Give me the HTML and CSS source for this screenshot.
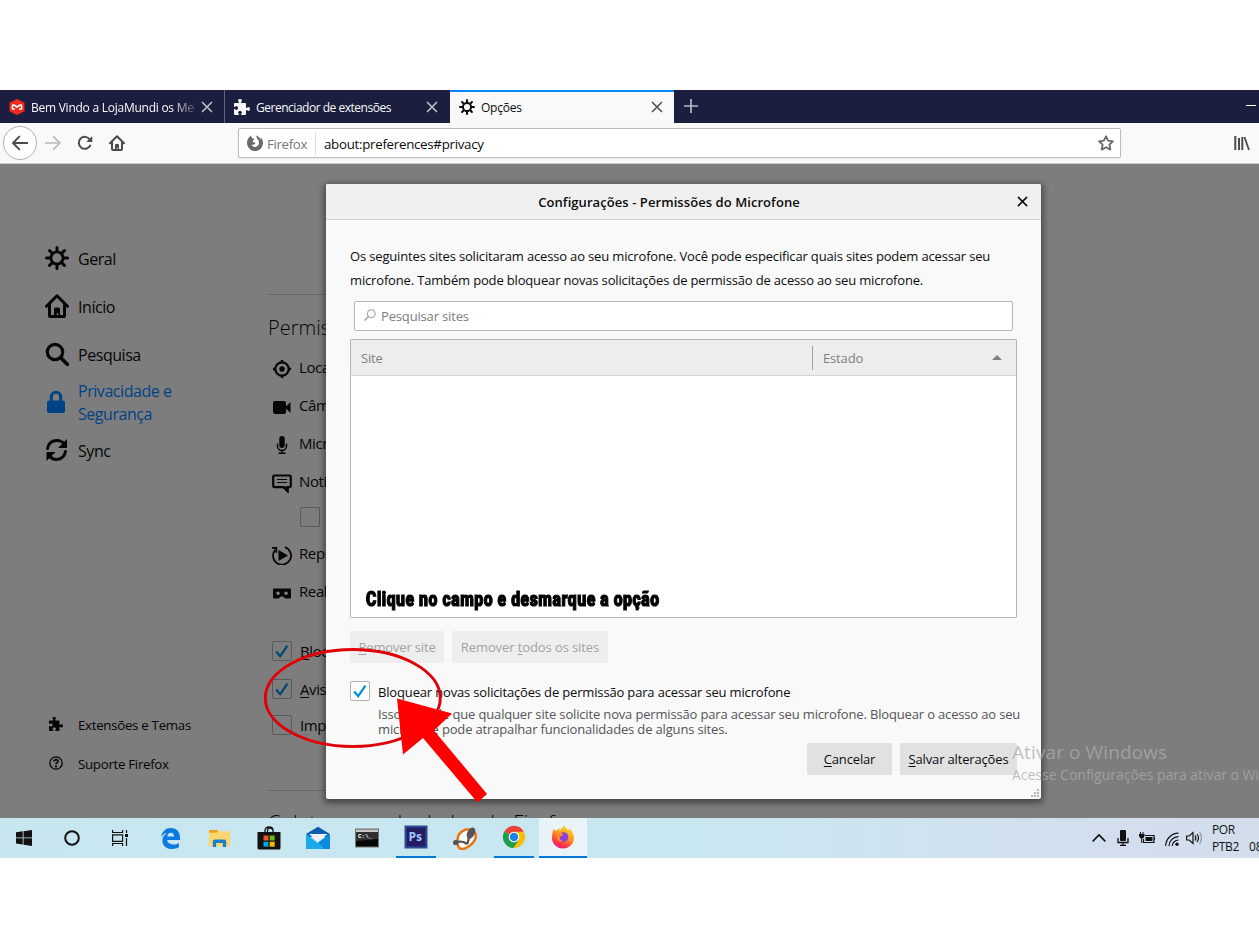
FILE: index.html
```html
<!DOCTYPE html>
<html lang="pt-BR">

<head>
  <meta charset="utf-8">
  <title>Opções</title>
  <link rel="stylesheet" href="styles.css">
</head>

<body>

  <!-- Shared icons -->
  <svg class="defs">
    <symbol id="gear" viewBox="0 0 16 16">
      <path d="M15 7h-2.1a4.967 4.967 0 0 0-.732-1.753l1.49-1.49a1 1 0 0 0-1.414-1.414l-1.49 1.49A4.968 4.968 0 0 0 9 3.1V1a1 1 0 0 0-2 0v2.1a4.968 4.968 0 0 0-1.753.732l-1.49-1.49a1 1 0 0 0-1.414 1.415l1.49 1.49A4.967 4.967 0 0 0 3.1 7H1a1 1 0 0 0 0 2h2.1a4.968 4.968 0 0 0 .737 1.763l-1.495 1.48a1 1 0 1 0 1.414 1.414l1.48-1.495A4.968 4.968 0 0 0 7 12.9V15a1 1 0 0 0 2 0v-2.1a4.968 4.968 0 0 0 1.753-.732l1.49 1.49a1 1 0 0 0 1.414-1.414l-1.49-1.49A4.967 4.967 0 0 0 12.9 9H15a1 1 0 0 0 0-2zM4.9 8a3.1 3.1 0 1 1 3.1 3.1 3.1 3.1 0 0 1-3.1-3.1z" />
    </symbol>
    <symbol id="puzzle" viewBox="0 0 16 16">
      <path d="M14.5 8c-.971 0-1 1-1.75 1a.765.765 0 0 1-.75-.75V5a1 1 0 0 0-1-1H7.75A.765.765 0 0 1 7 3.25c0-.75 1-.779 1-1.75C8 .635 7.1 0 6 0S4 .635 4 1.5c0 .971 1 1 1 1.75a.765.765 0 0 1-.75.75H1a1 1 0 0 0-1 1v2.25A.765.765 0 0 0 .75 8c.75 0 .779-1 1.75-1C3.365 7 4 7.9 4 9s-.635 2-1.5 2c-.971 0-1-1-1.75-1a.765.765 0 0 0-.75.75V15a1 1 0 0 0 1 1h3.25a.765.765 0 0 0 .75-.75c0-.75-1-.779-1-1.75 0-.865.9-1.5 2-1.5s2 .635 2 1.5c0 .971-1 1-1 1.75a.765.765 0 0 0 .75.75H11a1 1 0 0 0 1-1v-3.25a.765.765 0 0 1 .75-.75c.75 0 .779 1 1.75 1 .865 0 1.5-.9 1.5-2s-.635-2-1.5-2z" />
    </symbol>
    <symbol id="home" viewBox="0 0 16 16">
      <path d="M1 8.2 8 1.2l7 7M3 7v7.1q0 .9.9.9h8.2q.9 0 .9-.9V7" fill="none" stroke="currentColor" stroke-width="2" stroke-linecap="round" stroke-linejoin="round" />
      <path d="M6 15V10q0-1 1-1h2q1 0 1 1v5H8.800v-2.200h-1V15z" />
    </symbol>
    <symbol id="close" viewBox="0 0 12 12">
      <path d="M1.500 1.500l9 9M10.500 1.500l-9 9" fill="none" stroke="currentColor" stroke-width="1.700" stroke-linecap="round" />
    </symbol>
    <symbol id="check" viewBox="0 0 20 20">
      <path d="M3.500 10.500 8 15.700 16 4" fill="none" stroke="currentColor" stroke-width="2.500" />
    </symbol>
  </svg>

  <div class="screen">

    <div class="tabs">
      <div class="tab">
        <svg class="favicon" viewBox="0 0 16 16"><path d="M8 0l7.500 3.800v8.400L8 16 .5 12.200V3.800z" fill="#f5281e" /><path d="M5.800 10.300H4.200q-1-.5-.9-2.300.2-2.500 1.700-2L8 8l3-2q1.500-.5 1.700 2 .1 1.800-.9 2.300h-1.600" fill="none" stroke="#fff" stroke-width="1.600" /></svg>
        <span class="tab-label fade">Bem Vindo a LojaMundi os Melhores</span>
        <svg class="tab-close"><use href="#close" /></svg>
      </div>
      <div class="tab">
        <svg class="favicon"><use href="#puzzle" /></svg>
        <span class="tab-label narrow">Gerenciador de extensões</span>
        <svg class="tab-close"><use href="#close" /></svg>
      </div>
      <div class="tab active">
        <svg class="favicon"><use href="#gear" /></svg>
        <span class="tab-label">Opções</span>
        <svg class="tab-close"><use href="#close" /></svg>
      </div>
      <svg class="new-tab" viewBox="0 0 14 14"><path d="M7 0v14M0 7h14" stroke="currentColor" stroke-width="1.700" /></svg>
      <span class="minimize"></span>
    </div>

    <div class="toolbar">
      <span class="back"><svg viewBox="0 0 16 16"><path d="M15.500 8H1.300M7.300 1.600 1 8l6.300 6.400" fill="none" stroke="currentColor" stroke-width="1.900" stroke-linecap="round" stroke-linejoin="round" /></svg></span>
      <svg class="tool forward" viewBox="0 0 16 16"><path d="M.5 8h14.200M8.700 1.800 15 8l-6.300 6.200" fill="none" stroke="currentColor" stroke-width="1.700" stroke-linecap="round" stroke-linejoin="round" /></svg>
      <svg class="tool reload" viewBox="0 0 16 16"><path d="M13.200 10.500A6 6 0 1 1 12.800 4.500" fill="none" stroke="currentColor" stroke-width="2" stroke-linecap="round" /><path d="M15.300 1v6H9.300z" /></svg>
      <svg class="tool"><use href="#home" /></svg>

      <div class="urlbar">
        <svg class="fx" viewBox="0 0 16 16"><path d="M4 .5C1.500 2.200 0 4.800 0 8.200A8 8 0 0 0 16 8c0-2.500-.8-4.400-2.200-5.800.1.800.2 1.500 0 2.200C12.700 2.400 11 1 8.700.5c1 1 1.300 2 1.200 3.100 1.300.8 2 2 2 3.700A4 4 0 0 1 4.300 9.500c1.500.6 3 .3 3.900-.9.800-.7.200-1.200-.6-1.200-1 0-1.700-.3-2-.9.300-1 1-1.500 2-1.900-.3-.8-1-1.200-2-1.300C4.600 2.500 4 1.800 4 .5z" /></svg>
        <span class="identity">Firefox</span>
        <span class="url">about:preferences#privacy</span>
        <svg class="star" viewBox="0 0 16 16"><path d="M8 1.300l2.100 4.300 4.800.7-3.500 3.300.9 5L8 12.300l-4.300 2.300.9-5L1.100 6.300l4.800-.7z" fill="none" stroke="currentColor" stroke-width="1.800" stroke-linejoin="round" /></svg>
      </div>
      <svg class="library" viewBox="0 0 16 16"><path d="M1.300 1v14M5 3v12M8.300 2v13" stroke="currentColor" stroke-width="2" /><path d="M10.500 2l4.500 13" stroke="currentColor" stroke-width="1.800" /></svg>
    </div>

    <div class="content">
      <nav class="sidebar">
        <div class="category"><svg><use href="#gear" /></svg><span>Geral</span></div>
        <div class="category"><svg><use href="#home" /></svg><span>Início</span></div>
        <div class="category"><svg viewBox="0 0 24 24"><circle cx="10" cy="10" r="7.700" fill="none" stroke="currentColor" stroke-width="3.200" /><path d="M15.500 15.500l7 7" stroke="currentColor" stroke-width="3.600" stroke-linecap="round" /></svg><span>Pesquisa</span></div>
        <div class="category selected"><svg viewBox="0 0 24 24"><rect x="2" y="10.500" width="18" height="12.500" rx="2" /><path d="M6.300 11V7a4.700 4.700 0 0 1 9.400 0v4" fill="none" stroke="currentColor" stroke-width="3" /></svg><span>Privacidade e<br>Segurança</span></div>
        <div class="category"><svg viewBox="0 0 24 24"><path d="M2.500 10.500Q4 2.500 12 2.500q4.500 0 8 4M20.500 13.500Q19 21 11.500 21.500q-4.500 0-7.500-4" fill="none" stroke="currentColor" stroke-width="3" stroke-linecap="round" /><path d="M22 1v9h-9zM1.500 23v-9h9z" /></svg><span>Sync</span></div>
        <div class="links">
          <div class="link"><svg><use href="#puzzle" /></svg><span>Extensões e Temas</span></div>
          <div class="link"><svg viewBox="0 0 16 16"><circle cx="8" cy="8" r="7.100" fill="none" stroke="currentColor" stroke-width="1.500" /><path d="M5.800 6.300q.2-2.100 2.300-2.100t2.200 1.800q0 1.100-1.200 1.700Q8 8.300 8 9.500" fill="none" stroke="currentColor" stroke-width="1.900" /><circle cx="8" cy="11.900" r="1.200" /></svg><span>Suporte Firefox</span></div>
        </div>
      </nav>

      <main class="pane">
        <h2 class="permissions">Permissões</h2>
        <div class="row"><svg viewBox="0 0 20 20"><circle cx="10" cy="10" r="6.700" fill="none" stroke="currentColor" stroke-width="2.200" /><circle cx="10" cy="10" r="2.700" /><path d="M10 1v3M10 16v3M1 10h3M16 10h3" stroke="currentColor" stroke-width="2.400" /></svg>Localização</div>
        <div class="row"><svg viewBox="0 0 20 20"><rect x="1" y="4" width="13" height="13" rx="2" /><path d="M13 10.500 18.500 5v11z" /></svg>Câmera</div>
        <div class="row"><svg viewBox="0 0 20 20"><rect x="7.300" y="1" width="5.400" height="12" rx="2.700" /><path d="M5.500 8.500v2.500a4.500 4.500 0 0 0 9 0V8.500M10 15v3M6.500 18.200h7" fill="none" stroke="currentColor" stroke-width="1.400" /></svg>Microfone</div>
        <div class="row"><svg viewBox="0 0 20 20"><path d="M2.500 2.500h15q1.300 0 1.300 1.300v9q0 1.300-1.300 1.300h-2V18l-4-3.900h-9q-1.300 0-1.300-1.300v-9q0-1.300 1.300-1.300z" fill="none" stroke="currentColor" stroke-width="2.200" /><path d="M12 14h4v5zM5 6.500h10M5 9.500h10" stroke="currentColor" stroke-width="1.200" /></svg>Notificações</div>
        <div class="row sub"><span class="checkbox"></span></div>
        <div class="row"><svg viewBox="0 0 20 20"><path d="M13 2.200A9 9 0 1 1 3.200 4.800M0 2.800h4.300v5" fill="none" stroke="currentColor" stroke-width="1.800" /><path d="M6.500 5v11l9.500-5.500z" /></svg>Reprodução</div>
        <div class="row"><svg viewBox="0 0 20 20"><path d="M2 5.500h16q1 0 1 1v8q0 1-1 1h-4.500L11 13.500H9l-2.500 2H2q-1 0-1-1v-8q0-1 1-1z" /><circle cx="6" cy="10.300" r="1.800" fill="#7d7d7d" /><circle cx="14" cy="10.300" r="1.800" fill="#7d7d7d" /></svg>Realidade</div>
        <div class="row first"><span class="checkbox"><svg><use href="#check" /></svg></span><span><u>B</u>loquear</span></div>
        <div class="row"><span class="checkbox"><svg><use href="#check" /></svg></span><span><u>A</u>visar</span></div>
        <div class="row last"><span class="checkbox"></span><span>Impedir</span></div>
        <h2 class="collection">Coleta e uso de dados do Firefox</h2>
      </main>

      <div class="dialog">
        <div class="titlebar"><span>Configurações - Permissões do Microfone</span><svg><use href="#close" /></svg></div>
        <div class="dialog-body">
          <p class="intro">Os seguintes sites solicitaram acesso ao seu microfone. Você pode especificar quais sites podem acessar seu<br>microfone. Também pode bloquear novas solicitações de permissão de acesso ao seu microfone.</p>
          <div class="search"><svg viewBox="0 0 12 12"><circle cx="7.300" cy="4.700" r="4" fill="none" stroke="currentColor" /><path d="M4.500 7.500.5 11.500" stroke="currentColor" stroke-width="1.200" /></svg>Pesquisar sites</div>
          <div class="sites">
            <div class="columns"><span class="col-site">Site</span><span class="col-state">Estado<i class="sort"></i></span></div>
            <div class="note"><span>Clique no campo e desmarque a opção</span></div>
          </div>
          <div class="buttons">
            <button class="off" disabled><span><u>R</u>emover site</span></button>
            <button class="off wide" disabled><span>Remover <u>t</u>odos os sites</span></button>
          </div>
          <div class="block">
            <span class="checkbox"><svg><use href="#check" /></svg></span>
            <span class="block-label">Bloquear novas solicitações de permissão para acessar seu microfone</span>
          </div>
          <p class="hint">Isso impede que qualquer site solicite nova permissão para acessar seu microfone. Bloquear o acesso ao seu<br>microfone pode atrapalhar funcionalidades de alguns sites.</p>
          <div class="buttons end">
            <button class="cancel"><span><u>C</u>ancelar</span></button>
            <button class="save"><span><u>S</u>alvar alterações</span></button>
          </div>
        </div>
        <svg class="grip" viewBox="0 0 9 9"><path d="M6 0h2v2H6zM3 3h2v2H3zM6 3h2v2H6zM0 6h2v2H0zM3 6h2v2H3zM6 6h2v2H6z" /></svg>
      </div>

      <div class="watermark"><div class="wm-title">Ativar o Windows</div><div class="wm-text">Acesse Configurações para ativar o Windows.</div></div>

      <svg class="marker" viewBox="0 0 240 170">
        <ellipse cx="92.800" cy="58" rx="87.500" ry="48.500" fill="none" stroke="#e00008" stroke-width="3" />
        <path d="M137 58.500l55 15-18 17 53 63.500-9.500 8.500-54.500-64.500-20 16.500z" fill="#f00" />
      </svg>
    </div>

    <div class="taskbar">
      <span class="task"><svg viewBox="0 0 16 16"><path d="M0 2.300 6.700 1.300v6.200H0zM7.500 1.200 16 0v7.500H7.500zM0 8.300h6.700v6.300L0 13.600zM7.500 8.300H16V16l-8.500-1.200z" /></svg></span>
      <span class="task"><svg viewBox="0 0 16 16"><circle cx="8" cy="8" r="6.800" fill="none" stroke="currentColor" stroke-width="2" /></svg></span>
      <span class="task view"><svg viewBox="0 0 16 16"><path d="M.6 0v2.500h10V0M.6 16v-2.500h10V16M.6 4.800h10v6.500H.6zM14.500 0v3M14.500 8v8" fill="none" stroke="currentColor" stroke-width="1.200" /><rect x="13" y="4" width="3" height="3" /></svg></span>
      <span class="task app"><svg viewBox="0 0 20 22"><path d="M0 9.500C1.300 3.500 5 0 10.300 0 16.500 0 20 4.300 20 10v2.700H6.500c.3 3 2.700 4.600 6.300 4.600 2.200 0 4.300-.7 6-1.700v4.600C17 21.300 14.500 22 11.800 22 5.500 22 1.500 18.500 1.500 13c0-3.500 2-6.300 5.200-7.700C3.700 5.400 1.500 7 0 9.500zM6.700 9h7c0-2.400-1.200-4-3.400-4-2 0-3.300 1.600-3.600 4z" fill="#0a7be0" /></svg></span>
      <span class="task app"><svg viewBox="0 0 22 20"><path d="M0 1.500h9l1.500 1H22V18H0z" fill="#ffd66b" /><path d="M0 1h8l1.500 1.500L8 4H0z" fill="#eda018" /><path d="M4 19v-6q0-2 2-2h10q2 0 2 2v6h-3.500v-4.300h-7V19z" fill="#1681cf" /></svg></span>
      <span class="task app"><svg class="big" viewBox="0 0 24 24"><path d="M.5 6h23v16q0 1.500-1.500 1.500H2Q.5 23.500.5 22z" /><path d="M8 6V4.500q0-3.500 4-3.500t4 3.500V6M10.500 6V4q0-2 2.500-2t2.500 2" fill="none" stroke="#111" stroke-width="1.300" /><path d="M6.500 9.500h5v5h-5z" fill="#f25022" /><path d="M12.700 9.500h5v5h-5z" fill="#6db80b" /><path d="M6.500 15.700h5v5h-5z" fill="#00a4ef" /><path d="M12.700 15.700h5v5h-5z" fill="#ffb900" /></svg></span>
      <span class="task app"><svg class="big" viewBox="0 0 24 24"><path d="M0 8 12 .8 24 8v3H0z" fill="#0b5fae" /><path d="M0 8l12 9L24 8v15H0z" fill="#20c0f5" /><path d="M0 8l18 15H0z" fill="#1aa9ea" /><path d="M24 8v15h-6l-6-6.500z" fill="#0a8bdb" /><path d="M3 8h18.500L12 16z" fill="#eef1f5" /></svg></span>
      <span class="task app"><svg class="big" viewBox="0 0 24 24"><rect x=".5" y="3" width="23" height="18" fill="#060606" stroke="#777" /><path d="M1 3.500h22V6H1z" fill="#c8c8c8" /><path d="M1 6h22v7L1 15z" fill="#303030" /><text class="prompt" x="3" y="12">C:\_</text></svg></span>
      <span class="task app open"><svg class="big" viewBox="0 0 24 24"><rect x="1.500" y="1.500" width="21" height="21" fill="#241b62" stroke="#2a4d96" stroke-width="2" /><text class="ps" x="4.500" y="16">Ps</text></svg></span>
      <span class="task app"><svg class="big" viewBox="0 0 24 24"><path d="M5 20Q2 7 13 3.500q9-1 10 6.500-1 8-11 12.500-6 1.500-7-2.500z" fill="#fff" stroke="#e8720c" stroke-width="2.400" /><path d="M3 16q7-1 9.500 1t3-4l2-3" fill="none" stroke="#555" stroke-width="2.400" /><ellipse cx="18" cy="7" rx="3.700" ry="6" fill="#555" transform="rotate(28 18 7)" /><circle cx="2.600" cy="16.500" r="2.600" fill="#555" /></svg></span>
      <span class="task app open"><svg class="big" viewBox="0 0 24 24"><path d="M12 12 2.300 6.500A11 11 0 0 1 21.700 6.700z" fill="#ea4335" /><path d="M12 12V6.700h9.700A11 11 0 0 1 11.500 23z" fill="#fbbc05" /><path d="M12 12l4.800 2.700L11.500 23A11 11 0 0 1 2.300 6.500z" fill="#229c4c" /><circle cx="12" cy="12" r="5.300" fill="#fff" /><circle cx="12" cy="12" r="4.200" fill="#1a82e8" /></svg></span>
      <span class="task app open current"><svg class="big" viewBox="0 0 24 24"><defs><linearGradient id="flame" x1=".8" y1="0" x2=".3" y2="1"><stop offset="0" stop-color="#ffe226" /><stop offset=".45" stop-color="#ff9a1a" /><stop offset=".8" stop-color="#ff3647" /><stop offset="1" stop-color="#e31587" /></linearGradient></defs><path d="M2.500 4q1.200 1.500 3 1.700L8.500 3v3L13 .5q1.500 3 4.500 4.500l1-1.500Q23 8 23 13a11 10.500 0 0 1-22 0Q1 8 2.500 4z" fill="url(#flame)" /><circle cx="12.500" cy="12" r="4.800" fill="#8a3fe0" /><path d="M6 9q4-2 6.500.5L9 12q-1 3 3 4-4 1.500-6-2z" fill="#ff8b20" /></svg></span>

      <div class="tray">
        <svg class="chevron" viewBox="0 0 14 14"><path d="M1.500 10 7 4.300 12.500 10" fill="none" stroke="currentColor" stroke-width="1.400" /></svg>
        <svg class="mic" viewBox="0 0 12 16"><rect x="3" y="0" width="6" height="11" rx="1" /><path d="M1 8v4.500h10V8M6 12v3.300M3 15.300h6" fill="none" stroke="currentColor" stroke-width="1.300" /></svg>
        <svg class="battery" viewBox="0 0 16 14"><path d="M6 4.500h9v7H4.500V8M15 7h1v2" fill="none" stroke="currentColor" stroke-width="1.200" /><path d="M6.500 6h7v4h-7zM0 3h5.500v2q-.5 2.500-2.700 2.500T0 5z" /><path d="M1.500 1v2M4 1v2M2.700 7v5" stroke="currentColor" /></svg>
        <svg class="wifi" viewBox="0 0 14 14"><path d="M.7 14A13 13 0 0 1 13.500 1.200M4 14a9.500 9.500 0 0 1 9.500-9.300M7.200 14A6.300 6.300 0 0 1 13.500 8" fill="none" stroke="currentColor" stroke-width="1.200" /><circle cx="12" cy="12.300" r="1.700" /></svg>
        <svg class="volume" viewBox="0 0 16 14"><path d="M.6 5h2.600L7 1.500v11L3.200 9H.6zM9 4.500q1.700 2.500 0 5M11 3q3 4 0 8" fill="none" stroke="currentColor" stroke-width="1.200" /><path d="M13.500 1q4 6 0 12" fill="none" stroke="#8d98a5" stroke-width="1.200" /></svg>
        <span class="lang">POR<br>PTB2</span>
        <span class="clock">08:31</span>
      </div>
    </div>
  </div>

</body>

</html>
```

FILE: styles.css
```css
body {
  margin: 0;
  padding-top: 90px;
  background: #fff;
  font-family: "Open Sans", "Noto Sans", sans-serif;
  font-size: 13px;
  color: #0c0c0d;
  overflow: hidden;
}

svg {
  fill: currentColor;
  flex: none;
}

.defs {
  display: none;
}

h2,
p {
  margin: 0;
}

span,
p,
.row,
.wm-title,
.wm-text {
  white-space: nowrap;
}

.screen {
  width: 1259px;
  height: 768px;
  overflow: hidden;
}

/* Tabs */
.tabs {
  display: flex;
  align-items: center;
  height: 33px;
  background: #1b1e3e;
  color: #f9f9fa;
}

.tab {
  display: flex;
  align-items: center;
  box-sizing: border-box;
  width: 225px;
  height: 33px;
  padding: 0 11px 0 9px;
  border-right: 1px solid #62647c;
  font-size: 12px;
}

.tab:nth-child(2) {
  border-right-color: #1b1e3e;
}

.tab.active {
  width: 224px;
  border-right: 0;
  border-top: 2px solid #0a84ff;
  background: #f9f9fa;
  color: #0c0c0d;
  padding-bottom: 2px;
}

.favicon {
  width: 16px;
  height: 16px;
  margin-right: 6px;
}

.tab-label {
  flex: 1;
  overflow: hidden;
  padding-top: 1px;
  letter-spacing: -0.25px;
}

.tab-label.narrow {
  letter-spacing: -0.48px;
}

.fade {
  -webkit-mask-image: linear-gradient(to right, #000 86%, rgba(0, 0, 0, 0.2));
  mask-image: linear-gradient(to right, #000 86%, rgba(0, 0, 0, 0.2));
}

.tab-close {
  width: 12px;
  height: 12px;
  margin-left: 6px;
  color: #b9bac6;
}

.active .tab-close {
  color: #55555a;
}

.new-tab {
  width: 14px;
  height: 14px;
  margin: 0 0 2px 10px;
  color: #b9bac6;
}

.minimize {
  width: 10px;
  height: 1px;
  margin: 0 3px 3px auto;
  background: #fff;
}

/* Toolbar */
.toolbar {
  display: flex;
  align-items: center;
  box-sizing: border-box;
  height: 41px;
  padding-left: 3px;
  border-bottom: 1px solid #ccc;
  background: #f9f9fa;
  color: #4b4b4f;
}

.back {
  display: flex;
  align-items: center;
  justify-content: center;
  box-sizing: border-box;
  width: 34px;
  height: 34px;
  border: 1px solid #b1b1b3;
  border-radius: 50%;
  background: #fff;
}

.back svg,
.tool {
  width: 16px;
  height: 16px;
}

.tool {
  margin-left: 16px;
}

.forward {
  margin-left: 8px;
  color: #b8b8ba;
}

.urlbar {
  display: flex;
  align-items: center;
  box-sizing: border-box;
  width: 883px;
  height: 30px;
  margin-left: 113px;
  padding: 0 6px 0 8px;
  border: 1px solid #bbb;
  border-radius: 2px;
  background: #fff;
  box-shadow: 0 1px 3px rgba(0, 0, 0, 0.06);
}

.fx {
  width: 16px;
  height: 16px;
  color: #69696d;
}

.identity {
  width: 48px;
  margin-left: 4px;
  padding-top: 1px;
  border-right: 1px solid #ddd;
  color: #77777b;
  font-size: 13.3px;
  line-height: 22px;
  letter-spacing: -0.35px;
}

.url {
  margin-left: 8px;
  padding-top: 2px;
  color: #0c0c0d;
  font-size: 13.3px;
  letter-spacing: -0.28px;
}

.star {
  width: 16px;
  height: 16px;
  margin-left: auto;
  color: #69696d;
}

.library {
  width: 16px;
  height: 16px;
  margin-left: 113px;
}

/* Dimmed preferences page */
.content {
  position: relative;
  display: flex;
  height: 654px;
  background: #7d7d7d;
  color: #060606;
  overflow: hidden;
}

.sidebar {
  box-sizing: border-box;
  width: 268px;
  padding: 71px 0 0 45px;
}

.category {
  display: flex;
  align-items: center;
  height: 48px;
  font-size: 16px;
  line-height: 23px;
  letter-spacing: -0.45px;
}

.category svg {
  width: 24px;
  height: 24px;
  margin: 0 9px 2px 0;
}

.category span {
  padding-top: 1px;
}

.category.selected span {
  padding-top: 0;
}

.selected {
  color: #004285;
}

.links {
  padding-top: 230px;
}

.link {
  display: flex;
  align-items: center;
  height: 39px;
  font-size: 13.3px;
  letter-spacing: -0.3px;
}

.link svg {
  width: 14px;
  height: 14px;
  margin: 0 15px 2px 4px;
}

.pane {
  width: 720px;
  margin-top: 130px;
}

h2 {
  border-top: 1px solid #686868;
  font-size: 20px;
  font-weight: 300;
  line-height: 30px;
}

.permissions {
  height: 35px;
  padding: 18px 0 0;
}

.row {
  display: flex;
  align-items: center;
  height: 38px;
  padding-left: 4px;
  font-size: 15px;
  letter-spacing: -0.4px;
}

.row > svg {
  width: 20px;
  height: 20px;
  margin: 3px 7px 0 0;
}

.row.sub {
  height: 34px;
  padding-left: 32px;
}

.checkbox {
  box-sizing: border-box;
  flex: none;
  width: 20px;
  height: 20px;
  border: 1px solid #5a5a5a;
  border-radius: 2px;
}

.checkbox svg {
  display: block;
  width: 18px;
  height: 18px;
}

.row .checkbox {
  margin-right: 8px;
  color: #004b70;
}

.first {
  margin-top: 22px;
}

.row.last {
  height: 34px;
}

.collection {
  margin-top: 48px;
  padding-top: 17px;
  letter-spacing: 0.45px;
}

u {
  text-underline-offset: 2px;
}

/* Permissions dialog */
.dialog {
  position: absolute;
  left: 326px;
  top: 20px;
  width: 715px;
  height: 615px;
  border-radius: 2px;
  background: #f9f9f9;
  color: #0c0c0d;
  letter-spacing: -0.16px;
  box-shadow: 0 2px 6px 2px rgba(0, 0, 0, 0.45);
}

.titlebar {
  display: flex;
  align-items: center;
  height: 35px;
  padding-right: 13px;
  border-bottom: 1px solid #d5d5d5;
  border-radius: 2px 2px 0 0;
  background: #f0f0f0;
}

.titlebar span {
  flex: 1;
  padding-right: 5px;
  text-align: center;
  font-weight: 600;
  letter-spacing: 0.07px;
}

.titlebar svg {
  width: 11px;
  height: 11px;
  margin-bottom: 1px;
}

.dialog-body {
  padding: 24px 24px 0;
}

.intro {
  line-height: 24px;
}

.search {
  display: flex;
  align-items: center;
  box-sizing: border-box;
  height: 30px;
  margin: 9px 4px 8px;
  padding-left: 9px;
  border: 1px solid #b5b5b5;
  border-radius: 2px;
  background: #fff;
  color: #7c7c7c;
}

.search svg {
  width: 12px;
  height: 12px;
  margin: 0 5px 3px 0;
  color: #999;
}

.sites {
  display: flex;
  flex-direction: column;
  box-sizing: border-box;
  width: 667px;
  height: 279px;
  border: 1px solid #b5b5b5;
  border-radius: 1px;
  background: #fff;
}

.columns {
  display: flex;
  align-items: center;
  height: 35px;
  border-bottom: 1px solid #d5d5d5;
  background: #ededee;
  color: #808080;
}

.col-site {
  width: 451px;
  padding-left: 10px;
}

.col-state {
  display: flex;
  flex: 1;
  align-items: center;
  justify-content: space-between;
  height: 24px;
  padding: 0 14px 0 10px;
  border-left: 1px solid #a0a0a0;
}

.sort {
  border: 5px solid transparent;
  border-top: 0;
  border-bottom-color: #808080;
}

.note {
  margin: auto 0 2px 15px;
  line-height: 28px;
}

.note span {
  display: inline-block;
  transform: scaleX(0.77);
  transform-origin: left;
  font-family: Roboto, sans-serif;
  font-size: 20.500px;
  font-weight: 900;
  letter-spacing: 0.7px;
  color: #000;
  -webkit-text-stroke: 1.2px #000;
}

.buttons {
  display: flex;
  gap: 8px;
  margin-top: 13px;
}

button {
  height: 32px;
  padding: 0;
  border: 0;
  border-radius: 2px;
  background: #e1e1e1;
  color: #0c0c0d;
  font: inherit;
  letter-spacing: inherit;
}

.off {
  width: 94px;
  background: #eeeeef;
  color: #a2a2a3;
}

.off.wide {
  width: 156px;
  letter-spacing: -0.1px;
}

.cancel {
  width: 85px;
}

.save {
  width: 117px;
}

.end {
  justify-content: flex-end;
  margin-top: 7px;
}

.block {
  display: flex;
  gap: 8px;
  height: 20px;
  margin: 18px 0 6px;
  line-height: 23px;
}

.block .checkbox {
  border-color: #b1b1b1;
  background: #fff;
  color: #0092d6;
}

.hint {
  padding-left: 28px;
  color: #545458;
  line-height: 14.500px;
}

.grip {
  position: absolute;
  right: 1px;
  bottom: 1px;
  width: 9px;
  height: 9px;
  color: #b8b8b8;
}

.watermark {
  position: absolute;
  left: 1012px;
  top: 575px;
  color: rgba(172, 172, 172, 0.75);
}

.wm-title {
  font-size: 19px;
  line-height: 26px;
  letter-spacing: 0.1px;
}

.wm-text {
  font-size: 14px;
  line-height: 20px;
  letter-spacing: -0.02px;
}

/* Hand-drawn circle and arrow */
.marker {
  position: absolute;
  left: 260px;
  top: 476px;
  width: 240px;
  height: 170px;
  overflow: visible;
}

.taskbar {
  display: flex;
  height: 40px;
  background: linear-gradient(90deg, #c7e6f0, #c9e7f1 55%, #d2dfee 85%, #d3deed);
  color: #111;
}

.task {
  display: flex;
  align-items: center;
  justify-content: center;
  width: 48px;
}

.task svg {
  width: 16px;
  height: 16px;
}

.view {
  margin-right: 2px;
}

.task.app {
  box-sizing: border-box;
  width: 49px;
}

.task.app svg {
  width: 21px;
  height: 21px;
}

.task.app svg.big {
  width: 24px;
  height: 24px;
}

.task.app.open {
  width: 40px;
  margin: 0 4.500px;
  border-bottom: 2px solid #0078d7;
}

.task.app.current {
  width: 48px;
  margin: 0 0 0 1px;
  background: #e9f3f8;
}

.prompt {
  font: bold 6px "Liberation Mono", monospace;
  fill: #fff;
}

.ps {
  font: bold 12px "Open Sans", sans-serif;
  fill: #9cc9ff;
}

.tray {
  display: flex;
  align-items: center;
  margin-left: auto;
  font-size: 12px;
}

.tray svg {
  width: 16px;
  height: 16px;
  margin-right: 8px;
}

.tray .battery {
  margin-right: 9px;
}

.tray .volume {
  margin-right: 10px;
}

.tray .wifi {
  width: 14px;
  height: 14px;
  margin: 2px 7px 0 1px;
}

.lang {
  width: 28px;
  line-height: 17px;
  letter-spacing: -0.4px;
}

.clock {
  width: 10px;
  margin-left: 9px;
  padding-top: 17px;
}
```
